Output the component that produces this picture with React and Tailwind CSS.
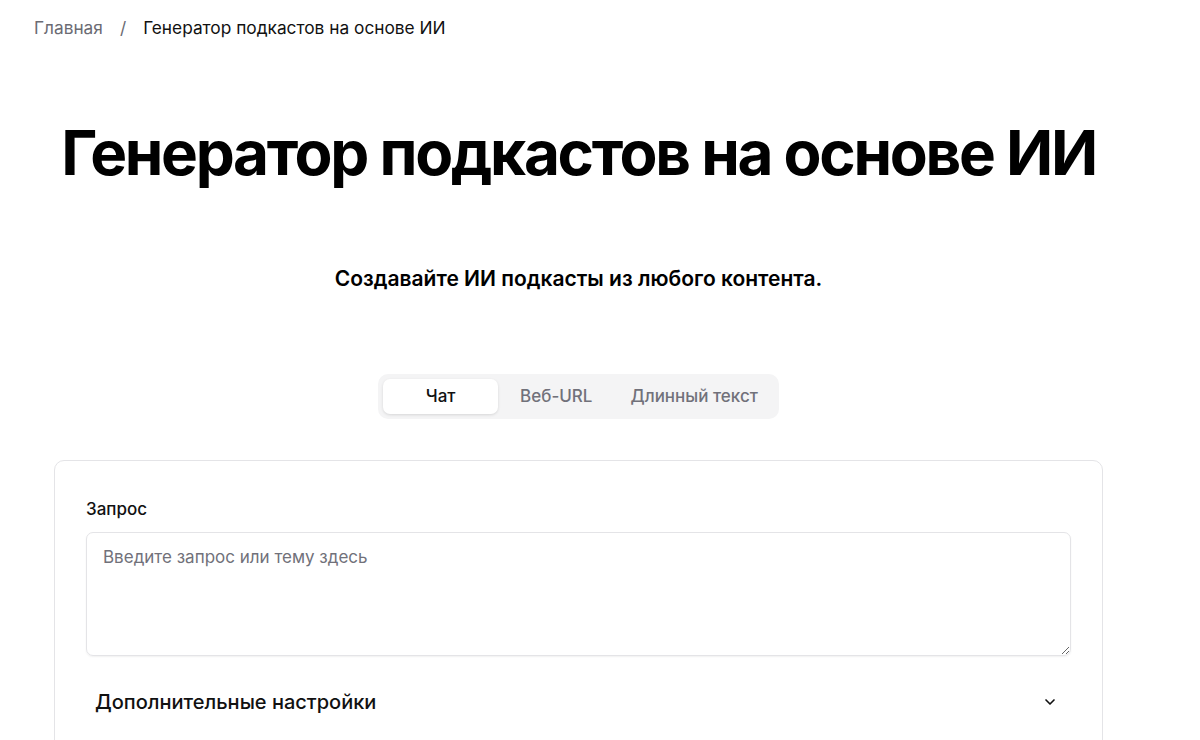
import React from "react";

export default function App() {
  return (
    <div className="min-h-[740px] bg-white text-black" style={{ fontFamily: "Inter, 'Noto Sans', sans-serif" }}>
      <div className="w-[1157px]">
        <nav className="flex items-center pl-[34px] pt-[17px] text-[17.3px] leading-[22px]">
          <span className="text-[#6b6b73]">Главная</span>
          <span className="mx-[17px] text-[#6b6b73]">/</span>
          <span className="text-[#111]">Генератор подкастов на основе ИИ</span>
        </nav>
        <h1 className="mt-[83px] whitespace-nowrap text-center text-[62px] font-bold leading-[62px] tracking-[-2.3px]">
          Генератор подкастов на основе ИИ
        </h1>
        <p className="mt-[81px] text-center text-[21px] font-semibold leading-[28px]">
          Создавайте ИИ подкасты из любого контента.
        </p>
        <div className="mt-[81px] flex justify-center">
          <div className="flex h-[45px] items-center gap-[4px] rounded-[10px] bg-[#f4f4f5] p-[5px]">
            <button className="h-[35px] w-[115px] rounded-[7px] bg-white text-[17px] font-medium text-[#111] shadow-[0_1px_3px_rgba(0,0,0,0.12)]">Чат</button>
            <button className="h-[35px] px-[18px] text-[17px] font-medium text-[#71717a]">Веб-URL</button>
            <button className="h-[35px] px-[16px] text-[17px] font-medium text-[#71717a]">Длинный текст</button>
          </div>
        </div>
        <div className="mx-auto mt-[41px] w-[1049px] rounded-[10px] border border-[#e4e4e7] px-[31px] pt-[36px] pb-[40px]">
          <label className="block text-[17px] font-medium leading-[24px] text-[#111]">Запрос</label>
          <textarea
            className="mt-[11px] block h-[124px] w-full resize-y rounded-[7px] border border-[#e4e4e7] px-[16px] py-[12px] text-[17px] leading-[24px] shadow-[0_1px_2px_rgba(0,0,0,0.06)] outline-none placeholder:text-[#71717a]"
            placeholder="Введите запрос или тему здесь"
          />
          <div className="mt-[32px] flex items-center justify-between pl-[9px] pr-[13px]">
            <span className="text-[20px] font-medium leading-[28px] text-[#111]">Дополнительные настройки</span>
            <svg width="16" height="16" viewBox="0 0 24 24" fill="none" stroke="#111" strokeWidth="2.5" strokeLinecap="round" strokeLinejoin="round">
              <path d="m6 9 6 6 6-6" />
            </svg>
          </div>
        </div>
      </div>
    </div>
  );
}
